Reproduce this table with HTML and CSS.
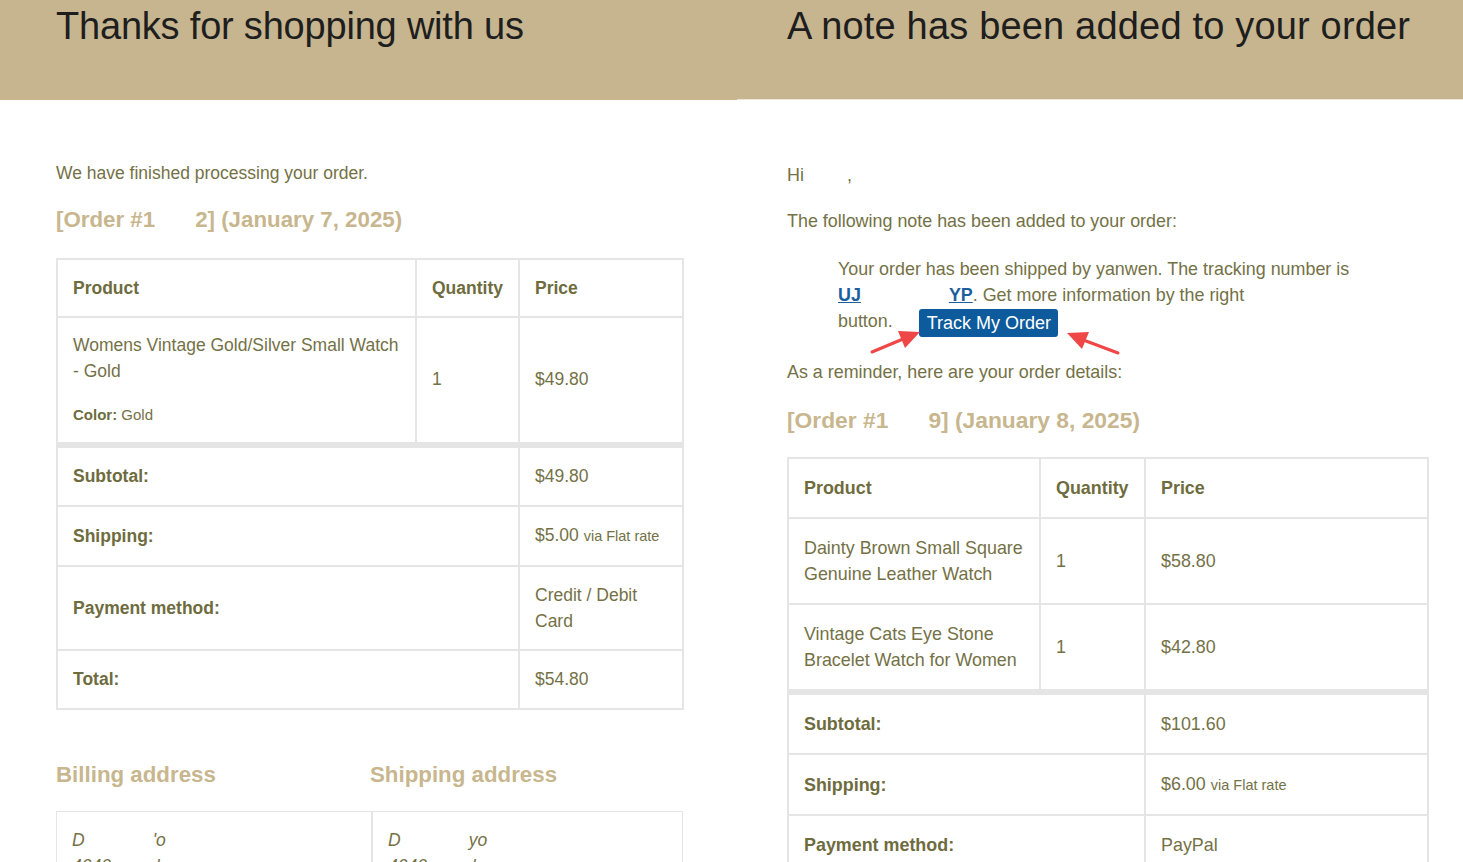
FILE: index.html
```html
<!DOCTYPE html>
<html>
<head>
<meta charset="utf-8">
<link rel="stylesheet" href="styles.css">
</head>
<body>
<div class="page">
  <section class="panel panel-left">
    <header class="hdr"><h1>Thanks for shopping with us</h1></header>
    <div class="content">
      <p class="intro">We have finished processing your order.</p>
      <h2 class="order-title">[Order #1<span class="gap g40"></span>2] (January 7, 2025)</h2>
      <table class="order">
        <colgroup><col class="lp"><col class="lq"><col class="lr"></colgroup>
        <thead>
          <tr><th class="prod">Product</th><th>Quantity</th><th>Price</th></tr>
        </thead>
        <tbody>
          <tr class="item-l">
            <td class="prod"><div class="pname">Womens Vintage Gold/Silver Small Watch - Gold</div><div class="meta"><b>Color:</b> Gold</div></td>
            <td>1</td>
            <td>$49.80</td>
          </tr>
        </tbody>
        <tfoot>
          <tr class="first"><th colspan="2">Subtotal:</th><td>$49.80</td></tr>
          <tr><th colspan="2">Shipping:</th><td>$5.00 <small>via Flat rate</small></td></tr>
          <tr class="pay"><th colspan="2">Payment method:</th><td>Credit / Debit Card</td></tr>
          <tr><th colspan="2">Total:</th><td>$54.80</td></tr>
        </tfoot>
      </table>
      <div class="addr-heads">
        <h2 class="addr-h">Billing address</h2>
        <h2 class="addr-h">Shipping address</h2>
      </div>
      <div class="addr-boxes">
        <address class="addr"><span>D<span class="gap g68"></span>'o</span><br>4040 <span class="gap g40"></span>k</address>
        <address class="addr"><span>D<span class="gap g68"></span>yo</span><br>4040 <span class="gap g40"></span>k</address>
      </div>
    </div>
  </section>

  <section class="panel panel-right">
    <header class="hdr hdr-r"><h1>A note has been added to your order</h1></header>
    <div class="content content-r">
      <p class="intro">Hi<span class="gap g42"></span>,</p>
      <p class="para">The following note has been added to your order:</p>
      <blockquote class="note">
        Your order has been shipped by yanwen. The tracking number is<br>
        <a class="trk">UJ</a><span class="gap g88"></span><a class="trk">YP</a>. Get more information by the right<br>
        button.<span class="gap g26"></span><span class="btn">Track My Order</span>
      </blockquote>
      <p class="para remind">As a reminder, here are your order details:</p>
      <h2 class="order-title">[Order #1<span class="gap g40"></span>9] (January 8, 2025)</h2>
      <table class="order order-r">
        <colgroup><col class="rp"><col class="rq"><col class="rr"></colgroup>
        <thead>
          <tr><th class="prod">Product</th><th>Quantity</th><th>Price</th></tr>
        </thead>
        <tbody>
          <tr class="item-r"><td class="prod">Dainty Brown Small Square Genuine Leather Watch</td><td>1</td><td>$58.80</td></tr>
          <tr class="item-r"><td class="prod">Vintage Cats Eye Stone Bracelet Watch for Women</td><td>1</td><td>$42.80</td></tr>
        </tbody>
        <tfoot>
          <tr class="first"><th colspan="2">Subtotal:</th><td>$101.60</td></tr>
          <tr><th colspan="2">Shipping:</th><td>$6.00 <small>via Flat rate</small></td></tr>
          <tr><th colspan="2">Payment method:</th><td>PayPal</td></tr>
          <tr><th colspan="2">Total:</th><td>$107.60</td></tr>
        </tfoot>
      </table>
    </div>
    <svg class="arrows" width="726" height="400" viewBox="0 0 726 400">
      <line x1="135" y1="352" x2="166" y2="339" stroke="#ef4646" stroke-width="3" stroke-linecap="round"/>
      <polygon points="183,332 168,348 161,331" fill="#ef4646"/>
      <line x1="381" y1="353" x2="349" y2="341" stroke="#ef4646" stroke-width="3" stroke-linecap="round"/>
      <polygon points="330,333 352,332 345,349" fill="#ef4646"/>
    </svg>
  </section>
</div>
</body>
</html>
```

FILE: styles.css
```css
html, body {
  margin: 0;
  padding: 0;
  background: #fff;
  overflow: hidden;
}
body {
  font-family: "Liberation Sans", Arial, sans-serif;
  color: #747146;
  width: 1463px;
  height: 862px;
}
.page {
  display: flex;
  align-items: flex-start;
}
.panel {
  position: relative;
}
.panel-left { width: 737px; font-size: 17.5px; }
.panel-right { width: 726px; font-size: 17.9px; }

.hdr {
  background: #c6b58f;
  height: 100px;
  padding: 0 0 0 56px;
  box-sizing: border-box;
}
.hdr-r {
  height: 100px;
  padding-left: 50px;
  border-bottom: 1px solid #eee6d4;
}
.hdr h1 {
  margin: 0;
  font-weight: normal;
  font-size: 38px;
  line-height: 52px;
  color: #1e1e1e;
  letter-spacing: -0.2px;
}
.hdr-r h1 { letter-spacing: 0.18px; }

.content {
  padding: 60px 54px 0 56px;
}
.content-r {
  padding: 62px 35px 0 50px;
}
.intro, .para {
  margin: 0;
  font-size: inherit;
  line-height: 26px;
}
.para { margin-top: 20px; }
.remind { margin-top: 22px; }

.order-title {
  margin: 21px 0 25px;
  font-size: 22.3px;
  line-height: 26px;
  font-weight: bold;
  color: #c8b68e;
}
.content-r .order-title { margin: 22px 0 24px; font-size: 22.8px; }

.gap { display: inline-block; }
.g26 { width: 26px; }
.g40 { width: 40px; }
.g42 { width: 43px; }
.g68 { width: 68px; }
.g88 { width: 88px; }

.note {
  margin: 22px 0 0 51px;
  line-height: 26px;
}
.trk {
  color: #1c5f9e;
  font-weight: bold;
  text-decoration: underline;
}
.btn {
  display: inline-block;
  background: #0d5b9c;
  color: #fff;
  font-size: 18px;
  line-height: 28px;
  padding: 0 7px 0 8px;
  border-radius: 3px;
  vertical-align: -2px;
}

.order {
  border-collapse: collapse;
  table-layout: fixed;
  width: 626px;
  border: 2px solid #e5e5e5;
  font-size: inherit;
}
.order th, .order td {
  border: 2px solid #e5e5e5;
  padding: 14px 15px;
  text-align: left;
  vertical-align: middle;
  line-height: 26px;
}
.order .prod { padding-right: 6px; }
.order th {
  font-weight: bold;
  color: #6e6c3e;
}
.order thead th { padding-top: 15px; padding-bottom: 15px; }
.lp { width: 359px; }
.lq { width: 103px; }
.lr { width: 164px; }
.item-l td { padding-top: 14px; padding-bottom: 16px; }
.meta {
  margin-top: 20px;
  font-size: 15px;
  line-height: 22px;
}
.meta b { color: #6e6c3e; }
.order tfoot tr.first th, .order tfoot tr.first td {
  border-top-width: 6px;
}
.order tfoot th, .order tfoot td { padding-top: 15px; padding-bottom: 16px; }
.order tfoot tr.pay td { padding-top: 15px; padding-bottom: 15px; }
.order small { font-size: 14.5px; }

.order-r { width: 640px; }
.rp { width: 252px; }
.rq { width: 105px; }
.rr { width: 283px; }
.order-r thead th { padding-top: 16px; padding-bottom: 16px; }
.item-r td { padding-top: 16px; padding-bottom: 16px; }
.order-r tfoot th, .order-r tfoot td { padding-top: 16px; padding-bottom: 16px; }

.addr-heads {
  display: grid;
  grid-template-columns: 314px 314px;
  margin-top: 52px;
}
.addr-h {
  margin: 0;
  font-size: 22.3px;
  line-height: 26px;
  color: #c8b68e;
}
.addr-boxes {
  display: grid;
  grid-template-columns: 314px 313px;
  margin-top: 23px;
  border: 1px solid #e5e5e5;
  width: 627px;
  box-sizing: border-box;
}
.addr {
  font-style: italic;
  line-height: 26px;
  padding: 15px 15px;
}
.addr + .addr { border-left: 2px solid #e5e5e5; }

.arrows {
  position: absolute;
  left: 0;
  top: 0;
  pointer-events: none;
}
```
